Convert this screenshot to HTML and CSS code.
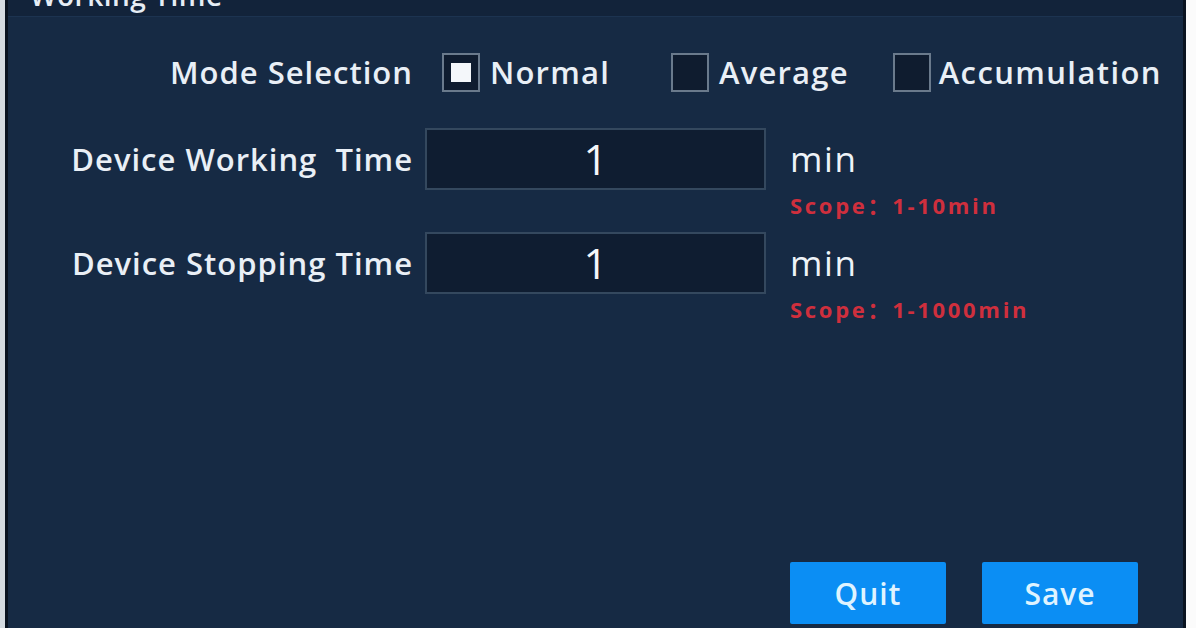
FILE: index.html
```html
<!DOCTYPE html>
<html>
<head>
<meta charset="utf-8">
<link rel="stylesheet" href="styles.css">
</head>
<body>
<div class="frame">
  <div class="edge-left"></div>
  <div class="panel">
    <div class="header"><span class="title">Working Time</span></div>
    <div class="form">
      <div class="row row-mode">
        <div class="label">Mode Selection</div>
        <div class="options">
          <label class="opt opt-normal"><span class="box checked"><span class="dot"></span></span><span class="opt-text">Normal</span></label>
          <label class="opt opt-average"><span class="box"></span><span class="opt-text">Average</span></label>
          <label class="opt opt-accum"><span class="box"></span><span class="opt-text">Accumulation</span></label>
        </div>
      </div>
      <div class="row row-field">
        <div class="label">Device Working&nbsp; Time</div>
        <div class="input">1</div>
        <div class="unit">
          <div class="unit-text">min</div>
          <div class="scope">Scope：1-10min</div>
        </div>
      </div>
      <div class="row row-field">
        <div class="label">Device Stopping Time</div>
        <div class="input">1</div>
        <div class="unit">
          <div class="unit-text">min</div>
          <div class="scope">Scope：1-1000min</div>
        </div>
      </div>
    </div>
    <div class="actions">
      <button class="btn quit">Quit</button>
      <button class="btn save">Save</button>
    </div>
  </div>
  <div class="edge-right"></div>
</div>
</body>
</html>
```

FILE: styles.css
```css
html, body {
  margin: 0;
  padding: 0;
  width: 1196px;
  height: 628px;
  overflow: hidden;
  background: #ffffff;
  font-family: "Open Sans", "Noto Sans", "Noto Sans CJK SC", sans-serif;
}

.frame {
  display: flex;
  width: 1196px;
  height: 628px;
}

.edge-left {
  width: 5px;
  background: #d5dbe1;
}

.edge-right {
  flex: 1;
  background: #fbfbfb;
}

.panel {
  width: 1175px;
  border-left: 3px solid #0a1320;
  border-right: 3px solid #0a1320;
  background: #162a44;
  display: flex;
  flex-direction: column;
}

.header {
  height: 16px;
  background: #12233a;
  border-bottom: 1px solid #1c3350;
  overflow: hidden;
  padding-left: 22px;
}

.title {
  display: block;
  margin-top: -20px;
  font-size: 28px;
  font-weight: 600;
  color: #e6edf5;
  line-height: 30px;
  letter-spacing: 0.5px;
}

.form {
  display: flex;
  flex-direction: column;
  padding-top: 36px;
}

.row {
  display: flex;
  align-items: flex-start;
}

.label {
  width: 405px;
  text-align: right;
  font-size: 31px;
  font-weight: 600;
  color: #e9eff6;
  white-space: nowrap;
  letter-spacing: 1px;
}

.row-mode {
  height: 39px;
  margin-bottom: 36px;
  align-items: center;
}

.row-mode .label {
  line-height: 39px;
  height: 39px;
}

.options {
  display: flex;
  margin-left: 29px;
  height: 39px;
  align-items: center;
}

.opt {
  display: flex;
  align-items: center;
}

.opt-normal {
  margin-right: 61px;
}

.opt-average {
  margin-right: 44px;
}

.opt-accum .opt-text {
  margin-left: 8px;
  letter-spacing: 1.4px;
}

.box {
  width: 34px;
  height: 35px;
  border: 2px solid #6a7a8c;
  background: #0f1c2f;
  display: flex;
  align-items: center;
  justify-content: center;
  box-sizing: content-box;
}

.dot {
  width: 20px;
  height: 19px;
  background: #f4f7fa;
}

.opt-text {
  margin-left: 10px;
  font-size: 31px;
  font-weight: 600;
  color: #e9eff6;
  letter-spacing: 1.2px;
  line-height: 39px;
}

.row-field {
  height: 104px;
}

.row-field .label {
  line-height: 62px;
}

.input {
  margin-left: 12px;
  width: 337px;
  height: 58px;
  border: 2px solid #34485e;
  background: #0f1d31;
  color: #f4f7fa;
  font-size: 42px;
  font-weight: 500;
  text-align: center;
  line-height: 58px;
}

.unit {
  margin-left: 24px;
  display: flex;
  flex-direction: column;
}

.unit-text {
  font-size: 35px;
  font-weight: 500;
  color: #eef3f8;
  line-height: 62px;
  letter-spacing: 1.6px;
}

.scope {
  font-size: 22px;
  font-weight: 700;
  color: #cf2f3d;
  line-height: 30px;
  letter-spacing: 2.7px;
}

.actions {
  margin-top: auto;
  display: flex;
  justify-content: flex-end;
  gap: 36px;
  padding-right: 45px;
  padding-bottom: 4px;
}

.btn {
  width: 156px;
  height: 62px;
  border: none;
  border-radius: 2px;
  background: #0b8ef4;
  color: #dff3ff;
  font-family: "Open Sans", "Noto Sans", sans-serif;
  font-size: 30px;
  font-weight: 600;
  letter-spacing: 1px;
  padding: 0;
}
```
